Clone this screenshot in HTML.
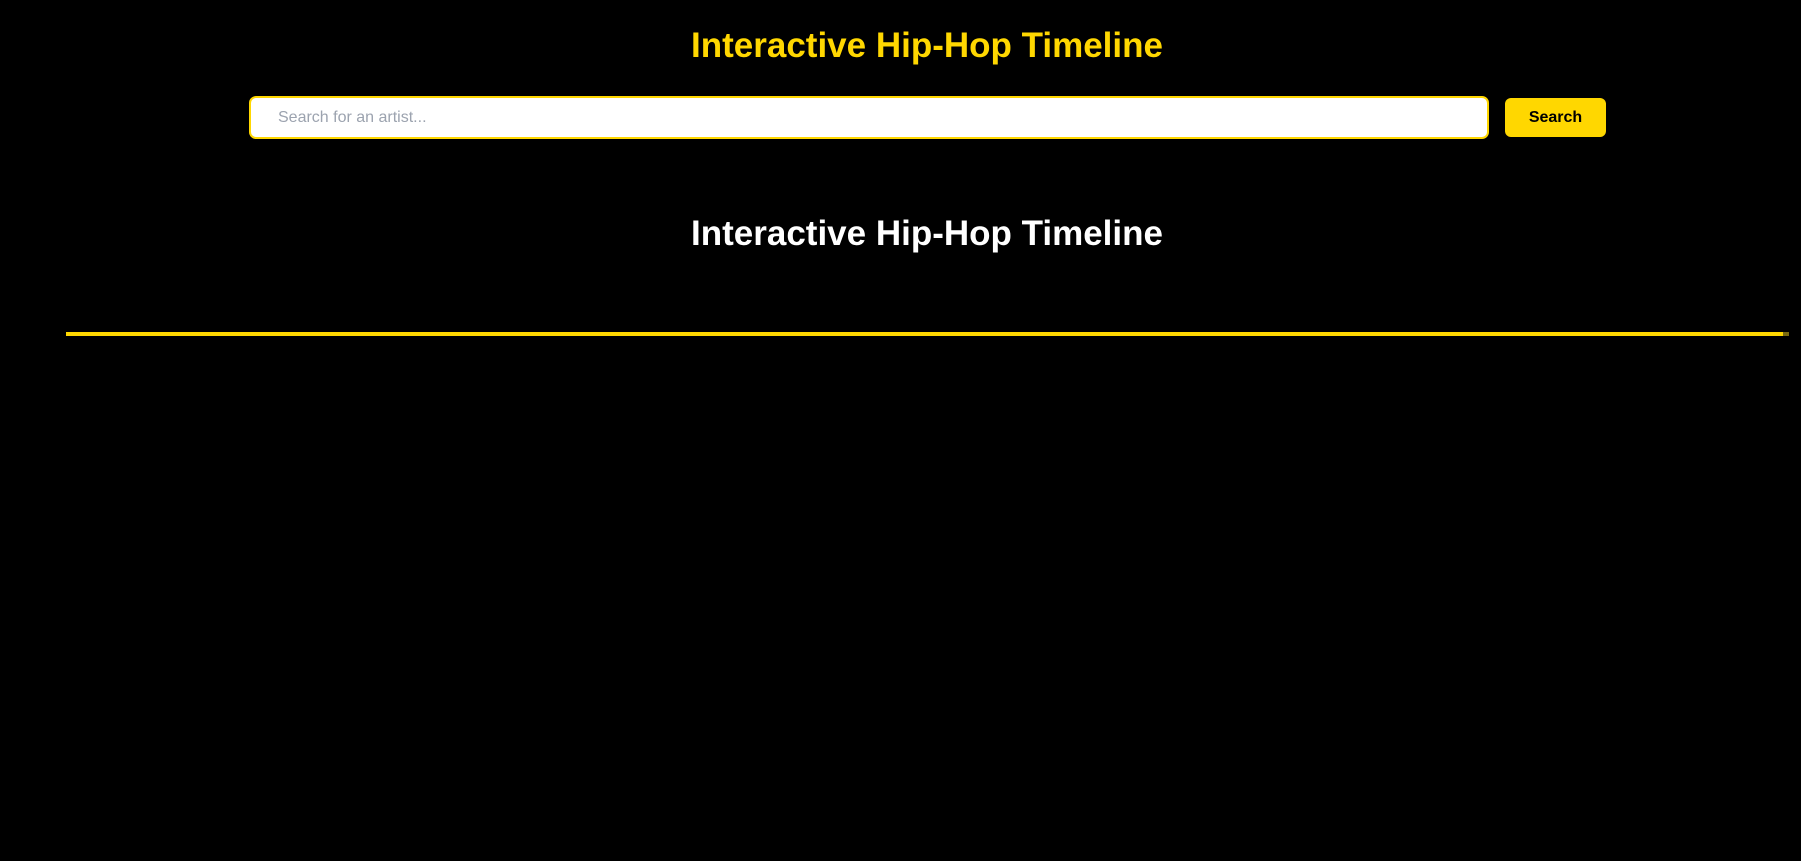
<!DOCTYPE html>
<html><head><meta charset="utf-8"><style>
html,body{margin:0;padding:0;background:#000;width:1801px;height:861px;overflow:hidden;font-family:"Liberation Sans",Arial,sans-serif}
.t{position:absolute;left:0;width:1855px;text-align:center;font-weight:bold;font-size:35px;line-height:normal;white-space:nowrap}
.inp{position:absolute;left:249px;top:96px;width:1236px;height:39px;border:2px solid #ffd700;border-radius:7px;background:#fff;box-sizing:content-box}
.inp span{position:absolute;left:27px;top:0;line-height:39px;font-size:16px;color:#9ca3af}
.btn{position:absolute;left:1505px;top:98px;width:101px;height:39px;background:#ffd700;border-radius:6px;text-align:center;line-height:39px;font-weight:bold;font-size:16px;color:#000}
.line{position:absolute;left:66px;top:332px;width:1717px;height:4px;background:#ffd700}
.line2{position:absolute;left:1783px;top:332px;width:6px;height:4px;background:#7a6a10}
</style></head><body>
<div class="t" style="top:26px;color:#ffd700;left:0;width:1854px">Interactive Hip-Hop Timeline</div>
<div class="inp"><span>Search for an artist...</span></div>
<div class="btn">Search</div>
<div class="t" style="top:214px;color:#fff;left:0;width:1854px">Interactive Hip-Hop Timeline</div>
<div class="line"></div><div class="line2"></div>
</body></html>
